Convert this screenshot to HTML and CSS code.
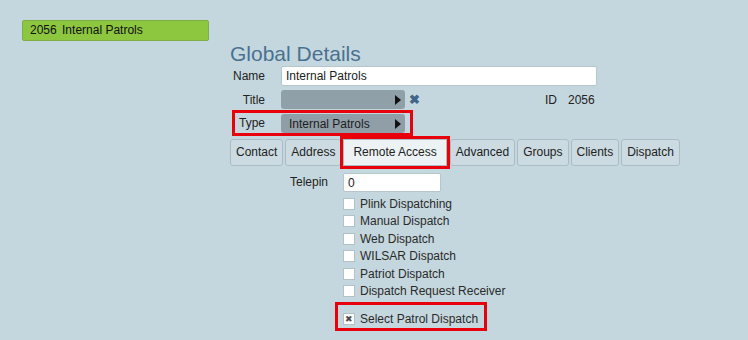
FILE: index.html
```html
<!DOCTYPE html>
<html lang="en">
<head>
    <meta charset="UTF-8">
    <title>Internal Patrols</title>
    <link rel="stylesheet" href="styles.css">
</head>
<body>

    <div class="page">

        <!-- Left list -->
        <div class="sidebar">
            <div class="item-selected"><span class="item-id">2056</span> Internal Patrols</div>
        </div>

        <!-- Details -->
        <div class="details">
            <h2>Global Details</h2>

            <div class="row">
                <label class="lbl">Name</label>
                <input type="text" class="text-field name-field" value="Internal Patrols">
            </div>

            <div class="row row-title">
                <label class="lbl">Title</label>
                <div class="picker"><span></span><span class="arrow"></span></div>
                <span class="clear">&#10006;</span>
                <div class="id-box"><span>ID</span><span>2056</span></div>
            </div>

            <div class="row row-type highlight">
                <label class="lbl">Type</label>
                <div class="picker"><span>Internal Patrols</span><span class="arrow"></span></div>
            </div>

            <div class="tabs">
                <div class="tab">Contact</div>
                <div class="tab">Address</div>
                <div class="tab active highlight">Remote Access</div>
                <div class="tab">Advanced</div>
                <div class="tab">Groups</div>
                <div class="tab">Clients</div>
                <div class="tab">Dispatch</div>
            </div>

            <div class="panel">
                <label class="panel-lbl">Telepin</label>
                <input type="text" class="text-field telepin" value="0">

                <div class="checks">
                    <div class="check"><span class="box"></span>Plink Dispatching</div>
                    <div class="check"><span class="box"></span>Manual Dispatch</div>
                    <div class="check"><span class="box"></span>Web Dispatch</div>
                    <div class="check"><span class="box"></span>WILSAR Dispatch</div>
                    <div class="check"><span class="box"></span>Patriot Dispatch</div>
                    <div class="check"><span class="box"></span>Dispatch Request Receiver</div>
                    <div class="check patrol highlight"><span class="box checked">&#10006;</span>Select Patrol Dispatch</div>
                </div>
            </div>
        </div>

    </div>

</body>
</html>
```

FILE: styles.css
```css
/* Reset */
* {
    margin: 0;
    padding: 0;
    box-sizing: border-box;
}

body {
    background: #c5d7de;
    font-family: 'Liberation Sans', Arial, sans-serif;
    font-size: 12px;
    color: #222;
}

.page {
    display: flex;
    padding: 20px 0 0 22px;
    height: 340px;
}

/* Sidebar */
.sidebar {
    width: 187px;
}

.item-selected {
    height: 21px;
    line-height: 19px;
    padding-left: 7px;
    background: #8dc63f;
    border: 1px solid #7fae44;
    border-radius: 2px;
    color: #111;
}

.item-id {
    margin-right: 2px;
}

/* Details */
.details {
    margin-left: 21px;
    padding-top: 23px;
    width: 460px;
}

h2 {
    font-size: 21px;
    font-weight: normal;
    line-height: 21px;
    color: #4a7190;
}

.row {
    display: flex;
    align-items: center;
    height: 20px;
    margin-top: 2px;
    width: 367px;
}

.lbl {
    width: 35px;
    text-align: right;
    margin-right: 16px;
}

.text-field {
    height: 20px;
    border: 1px solid #b7c6cc;
    border-radius: 2px;
    background: #fff;
    padding: 0 4px;
    font-family: inherit;
    font-size: 12px;
    color: #222;
    outline: none;
}

.name-field {
    width: 316px;
}

/* Picker */
.row-title {
    margin-top: 4px;
    height: 19px;
}

.picker {
    width: 124px;
    height: 19px;
    background: #8fa0a9;
    border-radius: 3px;
    display: flex;
    align-items: center;
    justify-content: space-between;
    padding: 0 4px 0 8px;
    color: #1c1c1c;
}

.row-type .picker {
    background: #909fa7;
    align-self: flex-end;
}

.arrow {
    width: 0;
    height: 0;
    border-top: 5px solid transparent;
    border-bottom: 5px solid transparent;
    border-left: 6px solid #111;
}

.clear {
    color: #3f6688;
    font-size: 13px;
    font-weight: bold;
    margin-left: 4px;
}

.id-box {
    margin-left: auto;
    margin-right: 4px;
    display: flex;
    gap: 11px;
    width: 48px;
}

.row-type {
    margin-top: 4px;
    margin-left: 5px;
    width: 175px;
}

.row-type .lbl {
    width: 30px;
}

.highlight {
    outline: 3px solid #e8000b;
}

/* Tabs */
.tabs {
    display: flex;
    gap: 2px;
    margin-top: 6px;
    height: 27px;
}

.tab {
    height: 27px;
    line-height: 25px;
    padding: 0 5px;
    background: #ccdbe1;
    border: 1px solid #aabdc6;
    border-radius: 3px;
    color: #222;
}

.tab.active {
    background: #edf2f4;
    padding: 0 9px;
    margin: 0 1px 0 0;
    border-radius: 0;
}

/* Remote access panel */
.panel {
    display: grid;
    grid-template-columns: 98px auto;
    column-gap: 15px;
    margin-top: 7px;
}

.panel-lbl {
    text-align: right;
    line-height: 19px;
}

.telepin {
    width: 98px;
    height: 19px;
}

.checks {
    grid-column: 2;
    padding-top: 3px;
}

.check {
    display: flex;
    align-items: center;
    height: 17.5px;
    color: #2a2a2a;
    white-space: nowrap;
}

.box {
    width: 12px;
    height: 12px;
    background: #fff;
    border: 1px solid #b3c2c8;
    margin-right: 5px;
    display: flex;
    align-items: center;
    justify-content: center;
    font-size: 9px;
    color: #4a4a4a;
}

.check.patrol {
    width: 146px;
    height: 23px;
    margin: 5px 0 0 -5px;
    padding: 4px 0 0 5px;
}
```
